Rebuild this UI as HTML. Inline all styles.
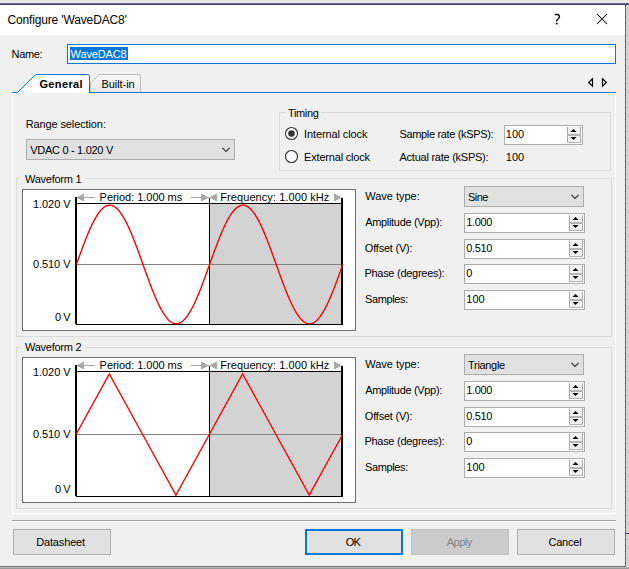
<!DOCTYPE html>
<html><head><meta charset="utf-8"><style>
html,body{margin:0;padding:0;}
body{width:629px;height:569px;position:relative;overflow:hidden;background:#f0f0f0;font-family:"Liberation Sans", sans-serif;}
.t{position:absolute;white-space:nowrap;}
</style></head><body>
<div style="position:absolute;left:0px;top:0px;width:629px;height:3px;background:#e9e9e9"></div>
<div style="position:absolute;left:0px;top:3px;width:629px;height:1px;background:#6262a6"></div>
<div style="position:absolute;left:0px;top:4px;width:629px;height:1px;background:#46466a"></div>
<div style="position:absolute;left:0px;top:5px;width:625px;height:30px;background:#fff"></div>
<div style="position:absolute;left:0px;top:35px;width:625px;height:531px;background:#f0f0f0"></div>
<div style="position:absolute;left:625px;top:5px;width:1px;height:562px;background:repeating-linear-gradient(#444 0 1px,#6e6e6e 1px 6px)"></div>
<div style="position:absolute;left:626px;top:5px;width:3px;height:564px;background:#d2d2d2"></div>
<div style="position:absolute;left:626px;top:533px;width:3px;height:1px;background:#3a3a8a"></div>
<div style="position:absolute;left:0px;top:566px;width:626px;height:1px;background:#777"></div>
<div style="position:absolute;left:0px;top:567px;width:629px;height:1px;background:#b4b4b4"></div>
<div style="position:absolute;left:0px;top:568px;width:629px;height:1px;background:#9a9a9a"></div>
<div class="t" style="left:7.40px;top:12px;font-size:12px;line-height:16px;color:#000;font-weight:normal;letter-spacing:-0.142px">Configure 'WaveDAC8'</div>
<svg style="position:absolute;left:550px;top:10px" width="16" height="18"><path d="M4.6 4.6 Q5.5 4.3 7 4.3 Q9.5 4.4 9.5 6.5 Q9.5 8 8 9 Q6.6 10 6.6 11.5" fill="none" stroke="#000" stroke-width="1.3"/><rect x="5.8" y="12.8" width="1.8" height="1.6" fill="#000"/></svg>
<svg style="position:absolute;left:596px;top:13px" width="12" height="12"><path d="M1 1 L11 11 M11 1 L1 11" stroke="#000" stroke-width="1.05"/></svg>
<div class="t" style="left:11.60px;top:47px;font-size:11px;line-height:15px;color:#000;font-weight:normal;letter-spacing:-0.35px">Name:</div>
<div style="position:absolute;left:67px;top:44px;width:549px;height:20px;box-sizing:border-box;border:1px solid #0078d7;background:#fff"></div>
<div style="position:absolute;left:70px;top:47px;width:58px;height:13px;background:#0078d7"></div>
<div class="t" style="left:70.60px;top:47px;font-size:11px;line-height:15px;color:#fff;font-weight:normal;letter-spacing:-0.129px">WaveDAC8</div>
<div style="position:absolute;left:12px;top:92px;width:604px;height:422px;box-sizing:border-box;border-left:1px solid #fff;border-right:1px solid #fff;border-bottom:1px solid #fff;background:#f0f0f0"></div>
<div style="position:absolute;left:12px;top:92px;width:604px;height:1px;background:#0078d7"></div>
<svg style="position:absolute;left:0;top:0" width="629" height="100"><defs><linearGradient id="bg1" x1="0" y1="0" x2="0" y2="1"><stop offset="0" stop-color="#f7f7f7"/><stop offset="1" stop-color="#e9e9e9"/></linearGradient></defs><path d="M17.5 93 L33.5 76.5 L36 74.5 L87.5 74.5 Q89 74.5 89 76.5 L89 93 Z" fill="#fff" stroke="none"/><path d="M12 92.5 L17.5 92.5 L33.5 76.5 L36.3 74.5 L87.5 74.5 Q89.5 74.5 89.5 76.5 L89.5 92.5" fill="none" stroke="#0078d7" stroke-width="1"/><path d="M90.5 92 L90.5 83 L99.5 74.5 L139 74.5 Q140.5 74.5 140.5 76.5 L140.5 92" fill="url(#bg1)" stroke="#b9b9b9" stroke-width="1"/></svg>
<div style="position:absolute;left:18px;top:92px;width:71px;height:1px;background:#fff"></div>
<div class="t" style="left:39.40px;top:77px;font-size:11px;line-height:15px;color:#000;font-weight:bold;letter-spacing:0.383px">General</div>
<div class="t" style="left:101.50px;top:77px;font-size:11px;line-height:15px;color:#000;font-weight:normal;letter-spacing:-0.057px">Built-in</div>
<svg style="position:absolute;left:586px;top:76px" width="24" height="13"><path d="M6.5 2.8 L2.7 6.5 L6.5 10.2 Z" fill="none" stroke="#000" stroke-width="1.2"/><path d="M16.5 2.8 L20.3 6.5 L16.5 10.2 Z" fill="none" stroke="#000" stroke-width="1.2"/></svg>
<div class="t" style="left:25.70px;top:117px;font-size:11px;line-height:15px;color:#000;font-weight:normal;letter-spacing:-0.113px">Range selection:</div>
<div style="position:absolute;left:26px;top:139px;width:209px;height:21px;box-sizing:border-box;border:1px solid #adadad;background:#e1e1e1"></div>
<div class="t" style="left:30.30px;top:143px;font-size:11px;line-height:15px;color:#000;font-weight:normal;letter-spacing:-0.3px">VDAC 0 - 1.020 V</div>
<svg style="position:absolute;left:220px;top:145px" width="13" height="9"><path d="M2.4 2.9 L6 6.5 L9.6 2.9" fill="none" stroke="#333" stroke-width="1.15"/></svg>
<div style="position:absolute;left:279px;top:112px;width:332px;height:59px;box-sizing:border-box;border:1px solid #dcdcdc"></div>
<div style="position:absolute;left:286px;top:112px;width:35px;height:1px;background:#f0f0f0"></div>
<div class="t" style="left:288.10px;top:106px;font-size:11px;line-height:15px;color:#000;font-weight:normal;letter-spacing:-0.38px">Timing</div>
<svg style="position:absolute;left:284px;top:126px" width="15" height="15"><circle cx="7.5" cy="7.5" r="6" fill="#fff" stroke="#333" stroke-width="1.1"/><circle cx="7.5" cy="7.5" r="3.3" fill="#333"/></svg>
<svg style="position:absolute;left:284px;top:149px" width="15" height="15"><circle cx="7.5" cy="7.5" r="6" fill="#fff" stroke="#333" stroke-width="1.1"/></svg>
<div class="t" style="left:304.10px;top:127px;font-size:11px;line-height:15px;color:#000;font-weight:normal;letter-spacing:-0.108px">Internal clock</div>
<div class="t" style="left:304.10px;top:150px;font-size:11px;line-height:15px;color:#000;font-weight:normal;letter-spacing:-0.192px">External clock</div>
<div class="t" style="left:399.50px;top:127px;font-size:11px;line-height:15px;color:#000;font-weight:normal;letter-spacing:-0.344px">Sample rate (kSPS):</div>
<div class="t" style="left:399.50px;top:150px;font-size:11px;line-height:15px;color:#000;font-weight:normal;letter-spacing:-0.25px">Actual rate (kSPS):</div>
<div class="t" style="left:505.70px;top:150px;font-size:11px;line-height:15px;color:#000;font-weight:normal;letter-spacing:0.1px">100</div>
<div style="position:absolute;left:504px;top:125px;width:79px;height:20px;box-sizing:border-box;border:1px solid #adadad;background:#fff"></div>
<svg style="position:absolute;left:0;top:0" width="629" height="569"><rect x="567" y="127" width="14" height="16" fill="#f0f0f0"/><rect x="567" y="127" width="1" height="16" fill="#a9a9a9"/><rect x="580" y="127" width="1" height="16" fill="#a9a9a9"/><rect x="567" y="142" width="14" height="1" fill="#b4b4b4"/><rect x="567" y="134" width="14" height="2" fill="#b4b4b4"/><path d="M570.5 132 L576.5 132 L573.5 129 Z" fill="#000"/><path d="M570.5 137 L576.5 137 L573.5 140 Z" fill="#000"/></svg>
<div class="t" style="left:505.70px;top:127px;font-size:11px;line-height:15px;color:#000;font-weight:normal;letter-spacing:0.1px">100</div>
<div style="position:absolute;left:16px;top:178px;width:596px;height:159px;box-sizing:border-box;border:1px solid #dcdcdc"></div>
<div style="position:absolute;left:20px;top:178px;width:65px;height:1px;background:#f0f0f0"></div>
<div class="t" style="left:25.00px;top:172px;font-size:11px;line-height:15px;color:#000;font-weight:normal;letter-spacing:-0.256px">Waveform 1</div>
<div style="position:absolute;left:22px;top:189px;width:334px;height:142px;box-sizing:border-box;border:1px solid #6e6e6e;background:#fff"></div>
<div style="position:absolute;left:210px;top:204px;width:131px;height:120px;background:#d3d3d3"></div>
<div style="position:absolute;left:75px;top:197px;width:2px;height:127px;background:#000"></div>
<div style="position:absolute;left:341px;top:198px;width:2px;height:126px;background:#000"></div>
<div style="position:absolute;left:209px;top:198px;width:1px;height:126px;background:#000"></div>
<div style="position:absolute;left:76px;top:203px;width:267px;height:1px;background:#000"></div>
<div style="position:absolute;left:76px;top:324px;width:267px;height:1px;background:#000"></div>
<div style="position:absolute;left:77px;top:264px;width:264px;height:1px;background:#808080"></div>
<svg style="position:absolute;left:0;top:0" width="629" height="569"><polyline points="76.40,264.50 76.90,263.10 77.40,261.70 77.90,260.31 78.40,258.91 78.90,257.52 79.40,256.14 79.90,254.75 80.40,253.38 80.90,252.01 81.40,250.64 81.90,249.29 82.40,247.94 82.90,246.60 83.40,245.27 83.90,243.96 84.40,242.65 84.90,241.36 85.40,240.07 85.90,238.81 86.40,237.55 86.90,236.32 87.40,235.09 87.90,233.89 88.40,232.70 88.90,231.53 89.40,230.37 89.90,229.24 90.40,228.12 90.90,227.03 91.40,225.96 91.90,224.90 92.40,223.87 92.90,222.87 93.40,221.88 93.90,220.92 94.40,219.99 94.90,219.07 95.40,218.19 95.90,217.33 96.40,216.49 96.90,215.68 97.40,214.90 97.90,214.15 98.40,213.43 98.90,212.73 99.40,212.06 99.90,211.42 100.40,210.82 100.90,210.24 101.40,209.69 101.90,209.17 102.40,208.68 102.90,208.22 103.40,207.80 103.90,207.41 104.40,207.04 104.90,206.71 105.40,206.42 105.90,206.15 106.40,205.92 106.90,205.72 107.40,205.55 107.90,205.41 108.40,205.31 108.90,205.24 109.40,205.21 109.90,205.20 110.40,205.23 110.90,205.29 111.40,205.39 111.90,205.52 112.40,205.68 112.90,205.87 113.40,206.10 113.90,206.36 114.40,206.65 114.90,206.98 115.40,207.33 115.90,207.72 116.40,208.14 116.90,208.59 117.40,209.07 117.90,209.58 118.40,210.12 118.90,210.70 119.40,211.30 119.90,211.93 120.40,212.59 120.90,213.29 121.40,214.00 121.90,214.75 122.40,215.53 122.90,216.33 123.40,217.16 123.90,218.01 124.40,218.89 124.90,219.80 125.40,220.73 125.90,221.69 126.40,222.67 126.90,223.67 127.40,224.70 127.90,225.74 128.40,226.81 128.90,227.90 129.40,229.01 129.90,230.14 130.40,231.29 130.90,232.46 131.40,233.65 131.90,234.85 132.40,236.07 132.90,237.30 133.40,238.55 133.90,239.82 134.40,241.10 134.90,242.39 135.40,243.69 135.90,245.01 136.40,246.33 136.90,247.67 137.40,249.02 137.90,250.37 138.40,251.73 138.90,253.10 139.40,254.48 139.90,255.86 140.40,257.25 140.90,258.64 141.40,260.03 141.90,261.42 142.40,262.82 142.90,264.22 143.40,265.62 143.90,267.02 144.40,268.41 144.90,269.81 145.40,271.20 145.90,272.59 146.40,273.97 146.90,275.35 147.40,276.72 147.90,278.08 148.40,279.44 148.90,280.79 149.40,282.13 149.90,283.46 150.40,284.78 150.90,286.09 151.40,287.39 151.90,288.67 152.40,289.94 152.90,291.20 153.40,292.44 153.90,293.66 154.40,294.87 154.90,296.07 155.40,297.24 155.90,298.40 156.40,299.54 156.90,300.66 157.40,301.75 157.90,302.83 158.40,303.89 158.90,304.92 159.40,305.93 159.90,306.92 160.40,307.89 160.90,308.83 161.40,309.75 161.90,310.64 162.40,311.50 162.90,312.34 163.40,313.16 163.90,313.94 164.40,314.70 164.90,315.43 165.40,316.13 165.90,316.81 166.40,317.45 166.90,318.07 167.40,318.65 167.90,319.21 168.40,319.73 168.90,320.22 169.40,320.69 169.90,321.12 170.40,321.52 170.90,321.89 171.40,322.22 171.90,322.53 172.40,322.80 172.90,323.04 173.40,323.25 173.90,323.42 174.40,323.56 174.90,323.67 175.40,323.75 175.90,323.79 176.40,323.80 176.90,323.78 177.40,323.72 177.90,323.63 178.40,323.51 178.90,323.35 179.40,323.17 179.90,322.95 180.40,322.69 180.90,322.41 181.40,322.09 181.90,321.74 182.40,321.36 182.90,320.95 183.40,320.51 183.90,320.03 184.40,319.52 184.90,318.99 185.40,318.42 185.90,317.82 186.40,317.20 186.90,316.54 187.40,315.86 187.90,315.14 188.40,314.40 188.90,313.63 189.40,312.83 189.90,312.01 190.40,311.16 190.90,310.28 191.40,309.38 191.90,308.46 192.40,307.51 192.90,306.53 193.40,305.53 193.90,304.51 194.40,303.47 194.90,302.40 195.40,301.32 195.90,300.21 196.40,299.08 196.90,297.94 197.40,296.77 197.90,295.59 198.40,294.39 198.90,293.18 199.40,291.94 199.90,290.70 200.40,289.43 200.90,288.16 201.40,286.87 201.90,285.57 202.40,284.26 202.90,282.93 203.40,281.60 203.90,280.25 204.40,278.90 204.90,277.54 205.40,276.17 205.90,274.80 206.40,273.42 206.90,272.03 207.40,270.64 207.90,269.25 208.40,267.85 208.90,266.46 209.40,265.06 209.90,263.66 210.40,262.26 210.90,260.87 211.40,259.47 211.90,258.08 212.40,256.69 212.90,255.31 213.40,253.93 213.90,252.55 214.40,251.19 214.90,249.83 215.40,248.48 215.90,247.14 216.40,245.80 216.90,244.48 217.40,243.17 217.90,241.87 218.40,240.59 218.90,239.31 219.40,238.05 219.90,236.81 220.40,235.58 220.90,234.37 221.40,233.17 221.90,231.99 222.40,230.83 222.90,229.69 223.40,228.57 223.90,227.46 224.40,226.38 224.90,225.32 225.40,224.28 225.90,223.27 226.40,222.27 226.90,221.30 227.40,220.36 227.90,219.44 228.40,218.54 228.90,217.67 229.40,216.82 229.90,216.00 230.40,215.21 230.90,214.45 231.40,213.71 231.90,213.01 232.40,212.33 232.90,211.68 233.40,211.06 233.90,210.46 234.40,209.90 234.90,209.37 235.40,208.87 235.90,208.40 236.40,207.97 236.90,207.56 237.40,207.18 237.90,206.84 238.40,206.53 238.90,206.25 239.40,206.01 239.90,205.79 240.40,205.61 240.90,205.46 241.40,205.35 241.90,205.27 242.40,205.22 242.90,205.20 243.40,205.22 243.90,205.27 244.40,205.35 244.90,205.46 245.40,205.61 245.90,205.79 246.40,206.01 246.90,206.25 247.40,206.53 247.90,206.84 248.40,207.18 248.90,207.56 249.40,207.97 249.90,208.40 250.40,208.87 250.90,209.37 251.40,209.90 251.90,210.46 252.40,211.06 252.90,211.68 253.40,212.33 253.90,213.01 254.40,213.71 254.90,214.45 255.40,215.21 255.90,216.00 256.40,216.82 256.90,217.67 257.40,218.54 257.90,219.44 258.40,220.36 258.90,221.30 259.40,222.27 259.90,223.27 260.40,224.28 260.90,225.32 261.40,226.38 261.90,227.46 262.40,228.57 262.90,229.69 263.40,230.83 263.90,231.99 264.40,233.17 264.90,234.37 265.40,235.58 265.90,236.81 266.40,238.05 266.90,239.31 267.40,240.59 267.90,241.87 268.40,243.17 268.90,244.48 269.40,245.80 269.90,247.14 270.40,248.48 270.90,249.83 271.40,251.19 271.90,252.55 272.40,253.93 272.90,255.31 273.40,256.69 273.90,258.08 274.40,259.47 274.90,260.87 275.40,262.26 275.90,263.66 276.40,265.06 276.90,266.46 277.40,267.85 277.90,269.25 278.40,270.64 278.90,272.03 279.40,273.42 279.90,274.80 280.40,276.17 280.90,277.54 281.40,278.90 281.90,280.25 282.40,281.60 282.90,282.93 283.40,284.26 283.90,285.57 284.40,286.87 284.90,288.16 285.40,289.43 285.90,290.70 286.40,291.94 286.90,293.18 287.40,294.39 287.90,295.59 288.40,296.77 288.90,297.94 289.40,299.08 289.90,300.21 290.40,301.32 290.90,302.40 291.40,303.47 291.90,304.51 292.40,305.53 292.90,306.53 293.40,307.51 293.90,308.46 294.40,309.38 294.90,310.28 295.40,311.16 295.90,312.01 296.40,312.83 296.90,313.63 297.40,314.40 297.90,315.14 298.40,315.86 298.90,316.54 299.40,317.20 299.90,317.82 300.40,318.42 300.90,318.99 301.40,319.52 301.90,320.03 302.40,320.51 302.90,320.95 303.40,321.36 303.90,321.74 304.40,322.09 304.90,322.41 305.40,322.69 305.90,322.95 306.40,323.17 306.90,323.35 307.40,323.51 307.90,323.63 308.40,323.72 308.90,323.78 309.40,323.80 309.90,323.79 310.40,323.75 310.90,323.67 311.40,323.56 311.90,323.42 312.40,323.25 312.90,323.04 313.40,322.80 313.90,322.53 314.40,322.22 314.90,321.89 315.40,321.52 315.90,321.12 316.40,320.69 316.90,320.22 317.40,319.73 317.90,319.21 318.40,318.65 318.90,318.07 319.40,317.45 319.90,316.81 320.40,316.13 320.90,315.43 321.40,314.70 321.90,313.94 322.40,313.16 322.90,312.34 323.40,311.50 323.90,310.64 324.40,309.75 324.90,308.83 325.40,307.89 325.90,306.92 326.40,305.93 326.90,304.92 327.40,303.89 327.90,302.83 328.40,301.75 328.90,300.66 329.40,299.54 329.90,298.40 330.40,297.24 330.90,296.07 331.40,294.87 331.90,293.66 332.40,292.44 332.90,291.20 333.40,289.94 333.90,288.67 334.40,287.39 334.90,286.09 335.40,284.78 335.90,283.46 336.40,282.13 336.90,280.79 337.40,279.44 337.90,278.08 338.40,276.72 338.90,275.35 339.40,273.97 339.90,272.59 340.40,271.20 340.90,269.81 341.40,268.41 341.90,267.02 342.40,265.62 342.90,264.22" fill="none" stroke="#ff0000" stroke-width="1.4"/></svg>
<div class="t" style="left:33.00px;top:197px;font-size:11px;line-height:15px;color:#000;font-weight:normal;letter-spacing:-0.067px">1.020 V</div>
<div class="t" style="left:32.90px;top:257px;font-size:11px;line-height:15px;color:#000;font-weight:normal;letter-spacing:-0.05px">0.510 V</div>
<div class="t" style="left:55.00px;top:310px;font-size:11px;line-height:15px;color:#000;font-weight:normal;letter-spacing:-0.5px">0 V</div>
<svg style="position:absolute;left:0;top:0" width="629" height="569" shape-rendering="crispEdges"><rect x="77" y="197" width="1" height="1" fill="#a9a9a9"/><rect x="78" y="196" width="2" height="3" fill="#a9a9a9"/><rect x="80" y="195" width="2" height="5" fill="#a9a9a9"/><rect x="82" y="194" width="2" height="7" fill="#a9a9a9"/><rect x="84" y="197" width="11" height="1" fill="#a9a9a9"/><rect x="191" y="197" width="10" height="1" fill="#a9a9a9"/><rect x="201" y="194" width="2" height="7" fill="#a9a9a9"/><rect x="203" y="195" width="2" height="5" fill="#a9a9a9"/><rect x="205" y="196" width="2" height="3" fill="#a9a9a9"/><rect x="207" y="197" width="2" height="1" fill="#a9a9a9"/><rect x="210" y="197" width="1" height="1" fill="#a9a9a9"/><rect x="211" y="196" width="2" height="3" fill="#a9a9a9"/><rect x="213" y="195" width="2" height="5" fill="#a9a9a9"/><rect x="215" y="194" width="2" height="7" fill="#a9a9a9"/><rect x="334" y="194" width="2" height="7" fill="#a9a9a9"/><rect x="336" y="195" width="2" height="5" fill="#a9a9a9"/><rect x="338" y="196" width="2" height="3" fill="#a9a9a9"/><rect x="340" y="197" width="1" height="1" fill="#a9a9a9"/></svg>
<div class="t" style="left:99.60px;top:190px;font-size:11px;line-height:15px;color:#000;font-weight:normal;letter-spacing:-0.033px">Period: 1.000 ms</div>
<div class="t" style="left:220.30px;top:190px;font-size:11px;line-height:15px;color:#000;font-weight:normal;letter-spacing:0.074px">Frequency: 1.000 kHz</div>
<div class="t" style="left:365.20px;top:189px;font-size:11px;line-height:15px;color:#000;font-weight:normal;letter-spacing:-0.011px">Wave type:</div>
<div style="position:absolute;left:464px;top:186px;width:120px;height:21px;box-sizing:border-box;border:1px solid #adadad;background:#e1e1e1"></div>
<div class="t" style="left:468.10px;top:190px;font-size:11px;line-height:15px;color:#000;font-weight:normal;letter-spacing:-0.567px">Sine</div>
<svg style="position:absolute;left:569px;top:192px" width="13" height="9"><path d="M2.4 2.9 L6 6.5 L9.6 2.9" fill="none" stroke="#333" stroke-width="1.15"/></svg>
<div class="t" style="left:365.20px;top:215px;font-size:11px;line-height:15px;color:#000;font-weight:normal;letter-spacing:-0.32px">Amplitude (Vpp):</div>
<div style="position:absolute;left:464px;top:213px;width:121px;height:20px;box-sizing:border-box;border:1px solid #adadad;background:#fff"></div>
<svg style="position:absolute;left:0;top:0" width="629" height="569"><rect x="569" y="215" width="14" height="16" fill="#f0f0f0"/><rect x="569" y="215" width="1" height="16" fill="#a9a9a9"/><rect x="582" y="215" width="1" height="16" fill="#a9a9a9"/><rect x="569" y="230" width="14" height="1" fill="#b4b4b4"/><rect x="569" y="222" width="14" height="2" fill="#b4b4b4"/><path d="M572.5 220 L578.5 220 L575.5 217 Z" fill="#000"/><path d="M572.5 225 L578.5 225 L575.5 228 Z" fill="#000"/></svg>
<div class="t" style="left:466.20px;top:215px;font-size:11px;line-height:15px;color:#000;font-weight:normal;letter-spacing:-0.325px">1.000</div>
<div class="t" style="left:364.80px;top:241px;font-size:11px;line-height:15px;color:#000;font-weight:normal;letter-spacing:-0.21px">Offset (V):</div>
<div style="position:absolute;left:464px;top:239px;width:121px;height:20px;box-sizing:border-box;border:1px solid #adadad;background:#fff"></div>
<svg style="position:absolute;left:0;top:0" width="629" height="569"><rect x="569" y="241" width="14" height="16" fill="#f0f0f0"/><rect x="569" y="241" width="1" height="16" fill="#a9a9a9"/><rect x="582" y="241" width="1" height="16" fill="#a9a9a9"/><rect x="569" y="256" width="14" height="1" fill="#b4b4b4"/><rect x="569" y="248" width="14" height="2" fill="#b4b4b4"/><path d="M572.5 246 L578.5 246 L575.5 243 Z" fill="#000"/><path d="M572.5 251 L578.5 251 L575.5 254 Z" fill="#000"/></svg>
<div class="t" style="left:466.20px;top:241px;font-size:11px;line-height:15px;letter-spacing:-0.325px">0.510</div>
<div class="t" style="left:364.40px;top:266px;font-size:11px;line-height:15px;color:#000;font-weight:normal;letter-spacing:-0.273px">Phase (degrees):</div>
<div style="position:absolute;left:464px;top:264px;width:121px;height:20px;box-sizing:border-box;border:1px solid #adadad;background:#fff"></div>
<svg style="position:absolute;left:0;top:0" width="629" height="569"><rect x="569" y="266" width="14" height="16" fill="#f0f0f0"/><rect x="569" y="266" width="1" height="16" fill="#a9a9a9"/><rect x="582" y="266" width="1" height="16" fill="#a9a9a9"/><rect x="569" y="281" width="14" height="1" fill="#b4b4b4"/><rect x="569" y="273" width="14" height="2" fill="#b4b4b4"/><path d="M572.5 271 L578.5 271 L575.5 268 Z" fill="#000"/><path d="M572.5 276 L578.5 276 L575.5 279 Z" fill="#000"/></svg>
<div class="t" style="left:466.20px;top:266px;font-size:11px;line-height:15px;letter-spacing:-0.325px">0</div>
<div class="t" style="left:365.00px;top:292px;font-size:11px;line-height:15px;color:#000;font-weight:normal;letter-spacing:-0.371px">Samples:</div>
<div style="position:absolute;left:464px;top:290px;width:121px;height:20px;box-sizing:border-box;border:1px solid #adadad;background:#fff"></div>
<svg style="position:absolute;left:0;top:0" width="629" height="569"><rect x="569" y="292" width="14" height="16" fill="#f0f0f0"/><rect x="569" y="292" width="1" height="16" fill="#a9a9a9"/><rect x="582" y="292" width="1" height="16" fill="#a9a9a9"/><rect x="569" y="307" width="14" height="1" fill="#b4b4b4"/><rect x="569" y="299" width="14" height="2" fill="#b4b4b4"/><path d="M572.5 297 L578.5 297 L575.5 294 Z" fill="#000"/><path d="M572.5 302 L578.5 302 L575.5 305 Z" fill="#000"/></svg>
<div class="t" style="left:466.20px;top:292px;font-size:11px;line-height:15px;letter-spacing:0.1px">100</div>
<div style="position:absolute;left:16px;top:347px;width:596px;height:162px;box-sizing:border-box;border:1px solid #dcdcdc"></div>
<div style="position:absolute;left:20px;top:347px;width:65px;height:1px;background:#f0f0f0"></div>
<div class="t" style="left:25.0px;top:340px;font-size:11px;line-height:15px;letter-spacing:-0.256px">Waveform 2</div>
<div style="position:absolute;left:22px;top:357px;width:334px;height:146px;box-sizing:border-box;border:1px solid #6e6e6e;background:#fff"></div>
<div style="position:absolute;left:210px;top:372px;width:131px;height:124px;background:#d3d3d3"></div>
<div style="position:absolute;left:75px;top:365px;width:2px;height:131px;background:#000"></div>
<div style="position:absolute;left:341px;top:366px;width:2px;height:130px;background:#000"></div>
<div style="position:absolute;left:209px;top:366px;width:1px;height:130px;background:#000"></div>
<div style="position:absolute;left:76px;top:371px;width:267px;height:1px;background:#000"></div>
<div style="position:absolute;left:76px;top:496px;width:267px;height:1px;background:#000"></div>
<div style="position:absolute;left:77px;top:434px;width:264px;height:1px;background:#808080"></div>
<svg style="position:absolute;left:0;top:0" width="629" height="569"><polyline points="76.00,434.50 109.33,374.00 142.65,434.50 175.98,495.00 209.30,434.50 242.62,374.00 275.95,434.50 309.28,495.00 342.60,434.50" fill="none" stroke="#ff0000" stroke-width="1.4"/></svg>
<div class="t" style="left:33.00px;top:365px;font-size:11px;line-height:15px;color:#000;font-weight:normal;letter-spacing:-0.067px">1.020 V</div>
<div class="t" style="left:32.90px;top:427px;font-size:11px;line-height:15px;color:#000;font-weight:normal;letter-spacing:-0.05px">0.510 V</div>
<div class="t" style="left:55.00px;top:482px;font-size:11px;line-height:15px;color:#000;font-weight:normal;letter-spacing:-0.5px">0 V</div>
<svg style="position:absolute;left:0;top:0" width="629" height="569" shape-rendering="crispEdges"><rect x="77" y="365" width="1" height="1" fill="#a9a9a9"/><rect x="78" y="364" width="2" height="3" fill="#a9a9a9"/><rect x="80" y="363" width="2" height="5" fill="#a9a9a9"/><rect x="82" y="362" width="2" height="7" fill="#a9a9a9"/><rect x="84" y="365" width="11" height="1" fill="#a9a9a9"/><rect x="191" y="365" width="10" height="1" fill="#a9a9a9"/><rect x="201" y="362" width="2" height="7" fill="#a9a9a9"/><rect x="203" y="363" width="2" height="5" fill="#a9a9a9"/><rect x="205" y="364" width="2" height="3" fill="#a9a9a9"/><rect x="207" y="365" width="2" height="1" fill="#a9a9a9"/><rect x="210" y="365" width="1" height="1" fill="#a9a9a9"/><rect x="211" y="364" width="2" height="3" fill="#a9a9a9"/><rect x="213" y="363" width="2" height="5" fill="#a9a9a9"/><rect x="215" y="362" width="2" height="7" fill="#a9a9a9"/><rect x="334" y="362" width="2" height="7" fill="#a9a9a9"/><rect x="336" y="363" width="2" height="5" fill="#a9a9a9"/><rect x="338" y="364" width="2" height="3" fill="#a9a9a9"/><rect x="340" y="365" width="1" height="1" fill="#a9a9a9"/></svg>
<div class="t" style="left:99.60px;top:358px;font-size:11px;line-height:15px;color:#000;font-weight:normal;letter-spacing:-0.033px">Period: 1.000 ms</div>
<div class="t" style="left:220.30px;top:358px;font-size:11px;line-height:15px;color:#000;font-weight:normal;letter-spacing:0.074px">Frequency: 1.000 kHz</div>
<div class="t" style="left:365.20px;top:357px;font-size:11px;line-height:15px;color:#000;font-weight:normal;letter-spacing:-0.011px">Wave type:</div>
<div style="position:absolute;left:464px;top:354px;width:120px;height:21px;box-sizing:border-box;border:1px solid #adadad;background:#e1e1e1"></div>
<div class="t" style="left:468.10px;top:358px;font-size:11px;line-height:15px;color:#000;font-weight:normal;letter-spacing:-0.329px">Triangle</div>
<svg style="position:absolute;left:569px;top:360px" width="13" height="9"><path d="M2.4 2.9 L6 6.5 L9.6 2.9" fill="none" stroke="#333" stroke-width="1.15"/></svg>
<div class="t" style="left:365.20px;top:383px;font-size:11px;line-height:15px;color:#000;font-weight:normal;letter-spacing:-0.32px">Amplitude (Vpp):</div>
<div style="position:absolute;left:464px;top:381px;width:121px;height:20px;box-sizing:border-box;border:1px solid #adadad;background:#fff"></div>
<svg style="position:absolute;left:0;top:0" width="629" height="569"><rect x="569" y="383" width="14" height="16" fill="#f0f0f0"/><rect x="569" y="383" width="1" height="16" fill="#a9a9a9"/><rect x="582" y="383" width="1" height="16" fill="#a9a9a9"/><rect x="569" y="398" width="14" height="1" fill="#b4b4b4"/><rect x="569" y="390" width="14" height="2" fill="#b4b4b4"/><path d="M572.5 388 L578.5 388 L575.5 385 Z" fill="#000"/><path d="M572.5 393 L578.5 393 L575.5 396 Z" fill="#000"/></svg>
<div class="t" style="left:466.20px;top:383px;font-size:11px;line-height:15px;color:#000;font-weight:normal;letter-spacing:-0.325px">1.000</div>
<div class="t" style="left:364.80px;top:409px;font-size:11px;line-height:15px;color:#000;font-weight:normal;letter-spacing:-0.21px">Offset (V):</div>
<div style="position:absolute;left:464px;top:407px;width:121px;height:20px;box-sizing:border-box;border:1px solid #adadad;background:#fff"></div>
<svg style="position:absolute;left:0;top:0" width="629" height="569"><rect x="569" y="409" width="14" height="16" fill="#f0f0f0"/><rect x="569" y="409" width="1" height="16" fill="#a9a9a9"/><rect x="582" y="409" width="1" height="16" fill="#a9a9a9"/><rect x="569" y="424" width="14" height="1" fill="#b4b4b4"/><rect x="569" y="416" width="14" height="2" fill="#b4b4b4"/><path d="M572.5 414 L578.5 414 L575.5 411 Z" fill="#000"/><path d="M572.5 419 L578.5 419 L575.5 422 Z" fill="#000"/></svg>
<div class="t" style="left:466.20px;top:409px;font-size:11px;line-height:15px;letter-spacing:-0.325px">0.510</div>
<div class="t" style="left:364.40px;top:434px;font-size:11px;line-height:15px;color:#000;font-weight:normal;letter-spacing:-0.273px">Phase (degrees):</div>
<div style="position:absolute;left:464px;top:432px;width:121px;height:20px;box-sizing:border-box;border:1px solid #adadad;background:#fff"></div>
<svg style="position:absolute;left:0;top:0" width="629" height="569"><rect x="569" y="434" width="14" height="16" fill="#f0f0f0"/><rect x="569" y="434" width="1" height="16" fill="#a9a9a9"/><rect x="582" y="434" width="1" height="16" fill="#a9a9a9"/><rect x="569" y="449" width="14" height="1" fill="#b4b4b4"/><rect x="569" y="441" width="14" height="2" fill="#b4b4b4"/><path d="M572.5 439 L578.5 439 L575.5 436 Z" fill="#000"/><path d="M572.5 444 L578.5 444 L575.5 447 Z" fill="#000"/></svg>
<div class="t" style="left:466.20px;top:434px;font-size:11px;line-height:15px;letter-spacing:-0.325px">0</div>
<div class="t" style="left:365.00px;top:460px;font-size:11px;line-height:15px;color:#000;font-weight:normal;letter-spacing:-0.371px">Samples:</div>
<div style="position:absolute;left:464px;top:458px;width:121px;height:20px;box-sizing:border-box;border:1px solid #adadad;background:#fff"></div>
<svg style="position:absolute;left:0;top:0" width="629" height="569"><rect x="569" y="460" width="14" height="16" fill="#f0f0f0"/><rect x="569" y="460" width="1" height="16" fill="#a9a9a9"/><rect x="582" y="460" width="1" height="16" fill="#a9a9a9"/><rect x="569" y="475" width="14" height="1" fill="#b4b4b4"/><rect x="569" y="467" width="14" height="2" fill="#b4b4b4"/><path d="M572.5 465 L578.5 465 L575.5 462 Z" fill="#000"/><path d="M572.5 470 L578.5 470 L575.5 473 Z" fill="#000"/></svg>
<div class="t" style="left:466.20px;top:460px;font-size:11px;line-height:15px;letter-spacing:0.1px">100</div>
<div style="position:absolute;left:12px;top:520px;width:604px;height:1px;background:#a0a0a0"></div>
<div style="position:absolute;left:12px;top:521px;width:604px;height:1px;background:#fff"></div>
<div style="position:absolute;left:13px;top:529px;width:98px;height:26px;box-sizing:border-box;border:1px solid #adadad;background:#e1e1e1"></div>
<div class="t" style="left:36.20px;top:535px;font-size:11px;line-height:15px;color:#000;font-weight:normal;letter-spacing:-0.15px">Datasheet</div>
<div style="position:absolute;left:305px;top:529px;width:98px;height:26px;box-sizing:border-box;border:2px solid #0078d7;background:#e1e1e1"></div>
<div class="t" style="left:345.70px;top:535px;font-size:11px;line-height:15px;color:#000;font-weight:normal;letter-spacing:-0.7px">OK</div>
<div style="position:absolute;left:411px;top:529px;width:98px;height:26px;box-sizing:border-box;border:1px solid #bfbfbf;background:#cccccc"></div>
<div class="t" style="left:446.80px;top:535px;font-size:11px;line-height:15px;color:#838383;font-weight:normal;letter-spacing:-0.525px">Apply</div>
<div style="position:absolute;left:517px;top:529px;width:98px;height:26px;box-sizing:border-box;border:1px solid #adadad;background:#e1e1e1"></div>
<div class="t" style="left:548.40px;top:535px;font-size:11px;line-height:15px;color:#000;font-weight:normal;letter-spacing:-0.2px">Cancel</div>
</body></html>
